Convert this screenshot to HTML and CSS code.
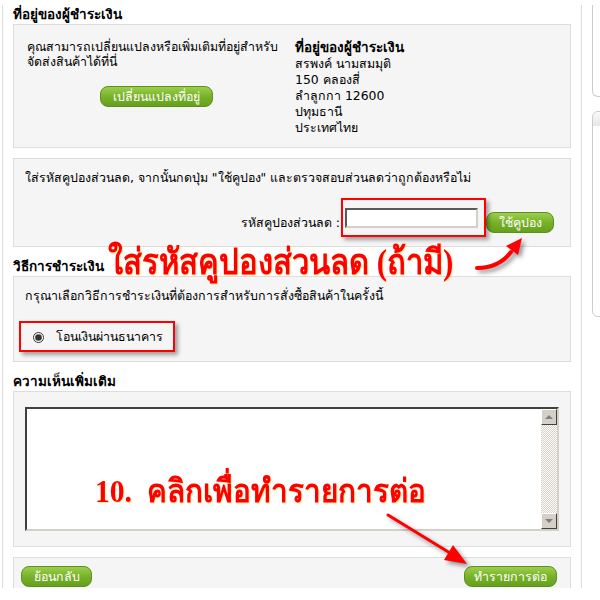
FILE: index.html
```html
<!DOCTYPE html>
<html lang="th">
<head>
  <meta charset="UTF-8">
  <meta name="viewport" content="width=device-width, initial-scale=1.0">
  <title>ชำระเงิน</title>
  <link rel="stylesheet" href="styles.css">
</head>
<body>
  <div class="page">
    <div class="main">
      <h3 class="section-title first">ที่อยู่ของผู้ชำระเงิน</h3>
      <div class="box address-box">
        <div class="address-note">
          <p>คุณสามารถเปลี่ยนแปลงหรือเพิ่มเติมที่อยู่สำหรับ<br>จัดส่งสินค้าได้ที่นี่</p>
          <button class="btn btn-address">เปลี่ยนแปลงที่อยู่</button>
        </div>
        <div class="address">
          <b>ที่อยู่ของผู้ชำระเงิน</b><br>
          สรพงค์ นามสมมุติ<br>
          150 คลองสี่<br>
          ลำลูกกา 12600<br>
          ปทุมธานี<br>
          ประเทศไทย
        </div>
      </div>

      <div class="box coupon-box">
        <p>ใส่รหัสคูปองส่วนลด, จากนั้นกดปุ่ม "ใช้คูปอง" และตรวจสอบส่วนลดว่าถูกต้องหรือไม่</p>
        <div class="coupon-row">
          <label for="coupon" class="coupon-label">รหัสคูปองส่วนลด :</label>
          <input type="text" id="coupon" class="coupon-input">
          <button class="btn btn-coupon">ใช้คูปอง</button>
        </div>
      </div>

      <h3 class="section-title">วิธีการชำระเงิน</h3>
      <div class="box payment-box">
        <p>กรุณาเลือกวิธีการชำระเงินที่ต้องการสำหรับการสั่งซื้อสินค้าในครั้งนี้</p>
        <label class="payment-option">
          <input type="radio" name="payment" checked>
          <span>โอนเงินผ่านธนาคาร</span>
        </label>
      </div>

      <h3 class="section-title">ความเห็นเพิ่มเติม</h3>
      <div class="box comment-box">
        <div class="comment-field">
          <textarea name="comment"></textarea>
          <div class="scrollbar">
            <span class="scroll-btn up"></span>
            <span class="scroll-track"></span>
            <span class="scroll-btn down"></span>
          </div>
        </div>
      </div>

      <div class="box actions-box">
        <button class="btn btn-back">ย้อนกลับ</button>
        <button class="btn btn-next">ทำรายการต่อ</button>
      </div>
    </div>

    <div class="side">
      <div class="side-box"></div>
      <div class="side-box side-box-tall">
        <div class="side-head"></div>
      </div>
    </div>

    <!-- annotations drawn over the form -->
    <div class="mark mark-coupon"></div>
    <div class="mark mark-payment"></div>
    <div class="note note-coupon">ใส่รหัสคูปองส่วนลด (ถ้ามี)</div>
    <div class="note note-next">10.&nbsp; คลิกเพื่อทำรายการต่อ</div>
    <svg class="arrows" width="600" height="600" viewBox="0 0 600 600">
      <path d="M477 268 Q499 268 511 252" fill="none" stroke="#f00" stroke-width="4" stroke-linecap="round"/>
      <polygon points="522,238 518,255 506,246" fill="#f00"/>
      <line x1="388" y1="515" x2="450" y2="553" stroke="#f00" stroke-width="3" stroke-linecap="round"/>
      <polygon points="467,564 444,560 453,545" fill="#f00"/>
    </svg>
  </div>
</body>
</html>
```

FILE: styles.css
```css
body {
  margin: 0;
  font-family: Tahoma, "DejaVu Sans", sans-serif;
  font-size: 12.4px;
  color: #000;
  background: #fff;
  overflow: hidden;
}

p {
  margin: 0;
}

.page {
  position: relative;
  display: flex;
  height: 588px;
  box-sizing: border-box;
  padding-top: 5px;
  overflow: hidden;
}

.main {
  flex: none;
  width: 580px;
  margin-left: 2px;
  padding: 0 10px;
  box-sizing: border-box;
  border-left: 1px solid #ddd;
  border-right: 1px solid #ddd;
}

.section-title {
  margin: 10px 0 0;
  height: 19px;
  line-height: 19px;
  font-size: 13.5px;
  font-weight: bold;
}

  .section-title.first {
    margin-top: 0;
  }

.box {
  background-color: #f5f5f5;
  border: 1px solid #ddd;
}

.address-box {
  display: flex;
  padding: 14px 13px 11px;
}

.address-note {
  flex: none;
  width: 258px;
  line-height: 15px;
  text-align: center;
}

  .address-note p {
    text-align: left;
  }

.address {
  margin-left: 10px;
  line-height: 16px;
}

  .address b {
    font-size: 13.5px;
  }

.btn {
  font-family: inherit;
  font-size: 12.4px;
  color: white;
  height: 21px;
  padding: 0 8px;
  border: 1px solid #5c8f1d;
  border-radius: 8px;
  background: linear-gradient(#9ccf4a, #78b22a 50%, #66a11c);
  cursor: pointer;
}

.btn-address {
  width: 113px;
  margin-top: 17px;
}

.coupon-box {
  margin-top: 10px;
  padding: 11px 16px 13px 11px;
  line-height: 16px;
}

.coupon-row {
  display: flex;
  justify-content: flex-end;
  align-items: flex-start;
  margin-top: 20px;
  height: 27px;
}

.coupon-label {
  margin-top: 9px;
}

.coupon-input {
  width: 133px;
  height: 20px;
  margin: 2px 0 0 5px;
  padding: 0;
  box-sizing: border-box;
  border: 2px solid;
  border-color: #5a5a5a #d4d0c8 #d4d0c8 #5a5a5a;
  background: white;
}

.btn-coupon {
  width: 68px;
  margin: 6px 0 0 8px;
}

.payment-box {
  padding: 11px 11px 16px;
  line-height: 16px;
}

.payment-option {
  display: flex;
  align-items: center;
  margin-top: 25px;
  margin-left: 8px;
}

  .payment-option input {
    width: 11px;
    height: 11px;
    margin: 0 12px 0 0;
    accent-color: #333;
  }

.comment-box {
  padding: 15px 11px;
}

.comment-field {
  display: flex;
  height: 124px;
  box-sizing: border-box;
  border: 2px solid;
  border-color: #404040 #d4d0c8 #d4d0c8 #404040;
  background: white;
}

  .comment-field textarea {
    flex: 1;
    border: none;
    resize: none;
    outline: none;
  }

.scrollbar {
  display: flex;
  flex-direction: column;
  width: 16px;
}

.scroll-btn {
  position: relative;
  height: 16px;
  box-sizing: border-box;
  background-color: #d4d0c8;
  border: 1px solid;
  border-color: #fff #404040 #404040 #fff;
}

  .scroll-btn::after {
    content: "";
    position: absolute;
    left: 3px;
    top: 5px;
    border-left: 4px solid transparent;
    border-right: 4px solid transparent;
  }

  .scroll-btn.up::after {
    border-bottom: 4px solid #808080;
  }

  .scroll-btn.down::after {
    border-top: 4px solid #808080;
  }

.scroll-track {
  flex: 1;
  background-image: repeating-conic-gradient(#d4d0c8 0 25%, #fff 0 50%);
  background-size: 2px 2px;
}

.actions-box {
  display: flex;
  justify-content: space-between;
  margin-top: 10px;
  padding: 8px 13px 8px 7px;
}

.btn-back {
  width: 71px;
}

.btn-next {
  width: 93px;
}

.side {
  margin-left: 10px;
}

.side-box {
  width: 200px;
  height: 92px;
  box-sizing: border-box;
  border: 1px solid #ccc;
  border-top: none;
  border-radius: 0 0 0 6px;
}

.side-box-tall {
  height: 206px;
  margin-top: 14px;
  border-top: 1px solid #ccc;
  border-radius: 6px 0 0 6px;
}

.side-head {
  height: 14px;
  border-radius: 6px 0 0 0;
  background: linear-gradient(#fafafa, #e6e6e6);
}

/* annotations */
.mark {
  position: absolute;
  border: 2px solid red;
  box-shadow: 3px 3px 4px rgba(0, 0, 0, 0.35);
}

.mark-coupon {
  left: 341px;
  top: 198px;
  width: 141px;
  height: 35px;
}

.mark-payment {
  left: 19px;
  top: 321px;
  width: 152px;
  height: 27px;
}

.note {
  position: absolute;
  color: red;
  font-family: "Liberation Serif", serif;
  font-weight: bold;
  white-space: nowrap;
  text-shadow: 1px 1px 1px rgba(255, 200, 0, 0.4);
  transform-origin: left top;
}

.note-coupon {
  left: 108px;
  top: 234px;
  font-size: 31px;
  line-height: 50px;
  transform: scaleY(1.15);
}

.note-next {
  left: 95px;
  top: 467px;
  font-size: 29.6px;
  line-height: 44px;
  transform: scaleY(1.1);
}

.arrows {
  position: absolute;
  left: 0;
  top: 0;
  pointer-events: none;
  filter: drop-shadow(3px 3px 2px rgba(0, 0, 0, 0.4));
}
```
